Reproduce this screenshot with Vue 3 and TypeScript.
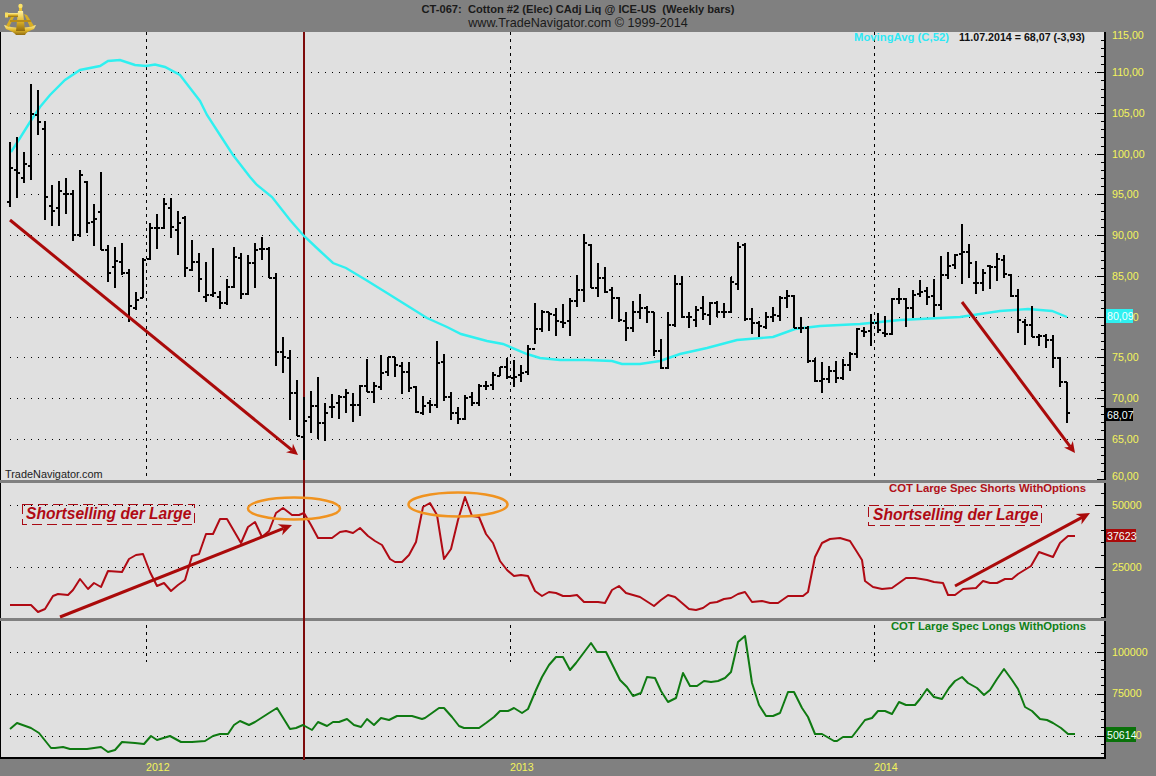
<script setup lang="ts">
type Bar = [number, number, number, number]
type Pt = [number, number]

// weekly bars in page pixels: high, low, open, close
const bars: Bar[] = [
  [142,207,202,168],[137,198,170,173],[152,183,178,164],[84,180,166,114],[90,135,115,122],[121,220,129,197],
  [185,226,206,211],[181,226,208,191],[178,214,194,194],[190,241,194,235],[170,237,235,175],[181,233,182,223],
  [204,246,222,219],[172,250,212,250],[245,282,250,273],[247,288,267,261],[243,275,262,273],[269,322,273,306],
  [292,310,308,300],[258,298,298,260],[223,260,259,228],[214,249,228,228],[198,229,228,204],[198,238,208,227],
  [211,255,230,223],[216,277,218,268],[240,271,270,262],[253,292,262,279],[262,302,297,295],[248,297,295,293],
  [291,309,297,303],[279,305,303,287],[247,288,287,257],[253,299,258,294],[255,295,294,263],[243,288,263,250],
  [237,260,249,249],[247,278,249,278],[273,366,278,352],[337,373,352,357],[350,420,358,393],[380,436,393,436],
  [397,460,437,421],[391,433,417,406],[377,439,406,423],[403,441,423,413],[394,418,407,407],[395,419,403,397],
  [389,413,397,393],[393,422,405,405],[385,416,405,386],[359,392,386,392],[382,403,392,386],[355,390,387,373],
  [357,376,372,357],[357,377,357,365],[362,394,366,372],[362,392,372,388],[386,413,387,412],[396,415,413,406],
  [400,413,403,405],[341,408,405,363],[354,401,362,397],[392,420,397,413],[407,424,413,419],[395,420,419,398],
  [392,406,397,403],[384,406,403,386],[381,390,386,386],[372,390,385,375],[367,376,376,367],[358,379,367,377],
  [360,387,378,377],[365,382,375,373],[345,375,372,349],[303,344,349,329],[310,332,329,312],[312,331,312,314],
  [308,336,315,321],[304,328,322,323],[298,336,321,301],[275,307,301,290],[234,302,290,243],[244,288,245,288],
  [263,297,288,278],[267,293,278,292],[287,319,290,298],[297,322,298,320],[312,341,321,328],[301,332,328,312],
  [294,319,312,308],[306,323,308,312],[312,356,312,351],[339,369,351,368],[312,369,368,325],[275,327,325,284],
  [276,318,284,317],[312,328,317,317],[306,327,320,310],[296,320,308,314],[302,325,315,303],[301,317,303,312],
  [303,318,312,312],[277,313,312,282],[242,290,284,247],[243,321,245,319],[308,334,319,323],[321,337,323,326],
  [312,329,327,317],[307,322,317,315],[296,321,316,298],[290,308,298,296],[295,328,296,328],[317,333,328,328],
  [326,363,328,361],[358,382,361,381],[362,393,381,379],[366,383,379,371],[361,383,371,378],[359,380,378,365],
  [352,371,365,354],[328,358,354,329],[327,337,331,332],[314,346,331,323],[313,333,323,330],[316,337,333,334],
  [298,335,334,299],[288,304,299,299],[298,327,299,308],[290,318,308,295],[280,297,294,292],[287,305,291,297],
  [279,317,296,305],[256,310,305,275],[252,279,275,266],[254,269,265,255],[224,284,254,252],[244,278,252,263],
  [261,294,283,283],[269,291,283,273],[265,289,266,267],[253,281,267,259],[255,278,260,274],[274,297,275,296],
  [289,333,296,320],[319,345,322,325],[306,337,325,337],[334,346,337,336],[334,348,336,340],[335,368,340,358],
  [357,387,358,382],[382,423,382,413]
]

const barPath = bars
  .map(([hi, lo, open, close], i) => {
    const x = 10 + 7 * i
    return `M${x} ${hi}V${lo}M${x - 3} ${open}H${x}M${x} ${close}H${x + 3}`
  })
  .join('')

const movingAvg = '11,152 20,138 30,122 40,107 50,95 65,80 80,70 100,66 108,61 120,60 135,65 146,66 155,64.5 165,67 180,75 190,88 200,101 207,115 220,135 233,155 250,177 257,185 272,197 290,220 304,236 320,251 333,263 346,268 366,280 387,293 403,303 427,318 447,327 461,334 487,341 503,344 527,354 540,358 560,360 587,360 612,361 622,364 640,364 660,361 680,354 707,348 737,340 773,337 795,329 820,326 860,324 900,320 960,317 1000,311 1028,309 1052,311 1067,317'

const shorts = '10,605 31,605 38,612 45,609 53,596 58,594 68,595 73,590 80,579 88,589 94,583 101,587 108,571 122,572 129,559 136,555 143,554 150,572 157,586 164,583 171,591 178,585 185,580 192,556 199,554 206,534 213,534 220,519 227,519 241,543 248,527 255,522 262,537 269,531 276,513 283,508 292,515 299,515 304,513 311,525 318,538 332,538 340,532 346,531 353,533 360,528 368,536 375,541 382,545 390,559 395,562 402,562 409,555 416,542 423,507 430,503 437,515 444,559 451,549 458,520 465,497 472,516 479,517 486,534 493,543 500,561 507,570 514,576 521,575 528,576 535,591 542,596 549,592 556,593 563,596 570,596 577,595 584,602 598,602 605,603 612,590 619,586 626,593 640,597 654,606 661,600 668,595 675,597 689,609 696,610 703,608 710,603 717,602 724,599 731,598 738,594 745,592 752,602 762,601 770,603 778,603 788,596 803,596 808,592 815,557 822,543 830,539 840,538 850,541 857,552 862,560 865,581 873,587 882,589 892,588 906,578 915,578 927,580 934,582 943,583 948,595 955,595 963,589 976,588 983,581 990,583 997,583 1005,579 1012,579 1018,574 1031,566 1039,552 1053,557 1060,543 1068,536 1075,536'

const longs = '10,729 17,723 31,728 39,733 51,748 55,748 63,747 70,749 87,749 101,747 108,752 115,750 122,742 135,743 144,744 151,736 157,740 170,736 181,742 192,742 205,741 213,736 220,734 228,734 234,725 240,721 249,725 255,722 269,713 277,708 290,729 296,728 303,725 312,730 318,722 327,726 333,722 339,722 347,719 354,725 361,727 367,719 374,725 381,718 389,720 397,716 412,716 422,719 425,718 439,708 444,708 452,717 459,726 464,728 479,728 486,723 494,717 500,711 508,711 514,708 522,713 528,709 536,690 542,677 549,665 556,657 563,657 570,670 576,663 591,643 597,652 606,652 620,680 627,687 633,696 641,693 647,677 655,678 661,691 668,702 676,698 683,673 690,686 697,686 704,681 711,682 718,681 725,678 731,672 738,642 745,636 752,683 759,705 766,716 773,716 780,713 788,692 794,692 802,708 808,717 815,734 822,734 834,741 837,741 843,737 852,737 865,720 872,718 878,711 885,711 892,714 899,702 906,705 915,705 920,699 927,689 934,697 942,699 949,688 955,681 962,677 968,683 977,688 984,695 990,690 997,679 1004,669 1012,680 1018,689 1025,707 1032,711 1040,719 1047,720 1053,723 1061,728 1068,734 1075,734'

function arrow(from: Pt, to: Pt, len: number, half: number) {
  const dx = to[0] - from[0]
  const dy = to[1] - from[1]
  const d = Math.hypot(dx, dy)
  const ux = dx / d
  const uy = dy / d
  const bx = to[0] - ux * len
  const by = to[1] - uy * len
  const nx = to[0] - ux * len * 0.7
  const ny = to[1] - uy * len * 0.7
  const head = [
    [to[0], to[1]],
    [bx - uy * half, by + ux * half],
    [nx, ny],
    [bx + uy * half, by - ux * half]
  ]
  return {
    x1: from[0],
    y1: from[1],
    x2: nx,
    y2: ny,
    head: head.map((p) => p.join(',')).join(' ')
  }
}

const priceArrows = [arrow([10, 220], [298, 455], 11, 5.5), arrow([962, 302], [1075, 453], 11, 5.5)]
const shortArrows = [arrow([60, 617], [292, 525], 13, 6), arrow([955, 586], [1090, 513], 13, 6)]

const priceY = (v: number) => 72.3 + (110 - v) * 8.14
const shortY = (v: number) => 505 + ((50000 - v) * 62) / 25000
const longY = (v: number) => 651.7 + ((100000 - v) * 42) / 25000

const range = (from: number, to: number, step: number) => {
  const out: number[] = []
  for (let v = from; v <= to; v += step) out.push(v)
  return out
}

const priceTicks = range(60, 114, 1).map((v) => ({ y: Math.round(priceY(v)) + 0.5, major: v % 5 === 0 }))
const shortTicks = range(5000, 55000, 5000).map((v) => ({ y: Math.round(shortY(v)) + 0.5, major: v % 25000 === 0 }))
const longTicks = range(40000, 110000, 5000).map((v) => ({ y: Math.round(longY(v)) + 0.5, major: v % 25000 === 0 }))

const priceGrid = range(65, 110, 5).map((v) => Math.round(priceY(v)) + 0.5)
const shortGrid = [50000, 25000].map((v) => Math.round(shortY(v)) + 0.5)
const longGrid = [100000, 75000, 50000].map((v) => Math.round(longY(v)) + 0.5)

const yearX = [146.5, 510.5, 874.5]
const years = ['2012', '2013', '2014']

const priceLabels = [
  { t: '115,00', y: 35 },
  ...range(65, 110, 5).reverse().map((v) => ({ t: `${v},00`, y: priceY(v) })),
  { t: '60,00', y: 476 }
]
</script>

<template>
  <div class="page">
    <header class="title">
      <svg class="logo" viewBox="0 0 36 36" width="36" height="36">
        <defs>
          <linearGradient id="gold" x1="0" y1="0" x2="0" y2="1">
            <stop offset="0" stop-color="#fff2a0" />
            <stop offset="0.5" stop-color="#e3b82a" />
            <stop offset="1" stop-color="#8f6a10" />
          </linearGradient>
        </defs>
        <path d="M3 24 Q19 30 35 24 L33 28 Q25 31 24 34 L15 34 Q13 31 5 28 Z" fill="url(#gold)" />
        <path d="M17 10 L22 10 L24 30 L15 30 Z" fill="url(#gold)" />
        <path d="M18 4 H21 V10 H18 Z" fill="#e8c030" />
        <circle cx="19.5" cy="5" r="2.2" fill="#fbe36a" />
        <path d="M4 12 H17 V16 H4 Z" fill="url(#gold)" />
        <path d="M4 11.5 H7 V16.5 H4 Z" fill="#f6dc60" />
        <path d="M10 16 L13 16 L8 26 L5 25 Z" fill="#d8ae24" />
        <path d="M23 13 L26 14 L33 25 L29 26 Z" fill="#d8ae24" />
        <path d="M9 19 H30 V21 H9 Z" fill="#b88c18" />
      </svg>
      <div class="title-main">CT-067:&nbsp; Cotton #2 (Elec) CAdj Liq @ ICE-US&nbsp; (Weekly bars)</div>
      <div class="title-sub">www.TradeNavigator.com © 1999-2014</div>
    </header>

    <section class="pane">
      <svg class="plot price" viewBox="1 32 1103 448">
        <line v-for="y in priceGrid" :key="y" class="dots" x1="10" :y1="y" x2="1098" :y2="y" />
        <line v-for="x in yearX" :key="x" class="dash" :x1="x" y1="32" :x2="x" y2="480" />
        <line class="marker" x1="304" y1="32" x2="304" y2="483" />
        <line v-for="t in priceTicks" :key="t.y" class="tick" :x1="t.major ? 1097 : 1101" :y1="t.y" x2="1104" :y2="t.y" />
        <polyline class="avg" :points="movingAvg" />
        <path class="bars" :d="barPath" />
        <g v-for="a in priceArrows" :key="a.x1">
          <line class="arrow" :x1="a.x1" :y1="a.y1" :x2="a.x2" :y2="a.y2" />
          <polygon class="head" :points="a.head" />
        </g>
        <text class="legend wide cyan" x="854" y="41">MovingAvg (C,52)</text>
        <text class="legend black" x="959" y="41">11.07.2014 = 68,07 (-3,93)</text>
        <text class="brand" x="5" y="478">TradeNavigator.com</text>
      </svg>
      <svg class="axis price" viewBox="1106 32 50 448">
        <text v-for="l in priceLabels" :key="l.t" class="scale" x="1112" :y="l.y + 4">{{ l.t }}</text>
        <rect x="1106" y="309" width="27" height="14" fill="#2ff0f0" />
        <text class="badge" x="1107" y="320">80,09</text>
        <rect x="1106" y="408" width="27" height="13" fill="#000" />
        <text class="badge" x="1107" y="418.5">68,07</text>
      </svg>
    </section>

    <section class="pane">
      <svg class="plot shorts" viewBox="1 483 1103 135">
        <line v-for="y in shortGrid" :key="y" class="dots" x1="10" :y1="y" x2="1098" :y2="y" />
        <line class="marker" x1="304" y1="481" x2="304" y2="621" />
        <line v-for="t in shortTicks" :key="t.y" class="tick" :x1="t.major ? 1096 : 1101" :y1="t.y" x2="1104" :y2="t.y" />
        <polyline class="series red" :points="shorts" />
        <g v-for="a in shortArrows" :key="a.x1">
          <line class="arrow" :x1="a.x1" :y1="a.y1" :x2="a.x2" :y2="a.y2" />
          <polygon class="head" :points="a.head" />
        </g>
        <ellipse class="oval" cx="294" cy="508.5" rx="46" ry="11" />
        <ellipse class="oval" cx="458" cy="504.5" rx="49.5" ry="12" />
        <rect class="note-box" x="22.5" y="504.5" width="172" height="20" />
        <text class="note" x="26" y="518.5">Shortselling der Large</text>
        <rect class="note-box" x="868.5" y="505.5" width="173" height="20" />
        <text class="note" x="873" y="519.5">Shortselling der Large</text>
        <text class="legend wide redtext" x="1086" y="492" text-anchor="end">COT Large Spec Shorts WithOptions</text>
      </svg>
      <svg class="axis shorts" viewBox="1106 483 50 135">
        <text class="scale" x="1112" y="509">50000</text>
        <text class="scale" x="1112" y="571">25000</text>
        <rect x="1106" y="529" width="30" height="13" fill="#aa0a0a" />
        <text class="badge" x="1107" y="539.5">37623</text>
      </svg>
    </section>

    <section class="pane">
      <svg class="plot longs" viewBox="1 621 1103 136">
        <line v-for="y in longGrid" :key="y" class="dots" x1="10" :y1="y" x2="1098" :y2="y" />
        <line v-for="x in yearX" :key="x" class="dash" :x1="x" y1="625" :x2="x" y2="662" />
        <line class="marker" x1="304" y1="619" x2="304" y2="760" />
        <line v-for="t in longTicks" :key="t.y" class="tick" :x1="t.major ? 1097 : 1101" :y1="t.y" x2="1104" :y2="t.y" />
        <polyline class="series green" :points="longs" />
        <text class="legend wide greentext" x="1086" y="630" text-anchor="end">COT Large Spec Longs WithOptions</text>
      </svg>
      <svg class="axis longs" viewBox="1106 621 50 136">
        <text class="scale" x="1112" y="656">100000</text>
        <text class="scale" x="1112" y="697">75000</text>
        <text class="scale" x="1112" y="739">50000</text>
        <rect x="1106" y="727" width="30" height="15" fill="#0a720a" />
        <text class="badge" x="1107" y="738.5">50614</text>
      </svg>
    </section>

    <footer class="years">
      <span v-for="y in years" :key="y">{{ y }}</span>
    </footer>
  </div>
</template>

<style>
html,
body {
  margin: 0;
  background: #808080;
}
</style>

<style scoped>
.page {
  position: relative;
  width: 1156px;
  height: 776px;
  display: flex;
  flex-direction: column;
  background: #808080;
  font-family: 'Liberation Sans', Arial, sans-serif;
  overflow: hidden;
}

.title {
  height: 32px;
  box-sizing: border-box;
  padding-top: 2px;
  display: flex;
  flex-direction: column;
  align-items: center;
  color: #1a1a1a;
}

.logo {
  position: absolute;
  left: 1px;
  top: 1px;
  z-index: 2;
}

.title-main {
  font-size: 11.13px;
  font-weight: 700;
  line-height: 14px;
}

.title-sub {
  font-size: 12.6px;
  line-height: 15px;
}

.pane {
  display: flex;
  margin-bottom: 3px;
  border-left: 1px solid #000;
}

.pane:nth-of-type(3) {
  margin-bottom: 0;
}

.plot {
  display: block;
  width: 1103px;
  background: #e0e0e0;
  border-right: 2px solid #000;
  overflow: visible;
}

.axis {
  display: block;
  width: 50px;
  overflow: visible;
}

.price {
  height: 448px;
}

.shorts {
  height: 135px;
}

.longs {
  height: 136px;
  border-bottom: 2px solid #000;
}

.axis.longs {
  border-bottom: 0;
}

.dots {
  stroke: #000;
  stroke-dasharray: 1 6;
  shape-rendering: crispEdges;
}

.dash {
  stroke: #000;
  stroke-dasharray: 3 4;
  shape-rendering: crispEdges;
}

.marker {
  stroke: #7d0a0a;
  stroke-width: 2;
  shape-rendering: crispEdges;
}

.tick {
  stroke: #000;
  shape-rendering: crispEdges;
}

.avg {
  fill: none;
  stroke: #2ff0f0;
  stroke-width: 2.4;
}

.bars {
  fill: none;
  stroke: #000;
  stroke-width: 2;
  shape-rendering: crispEdges;
}

.series {
  fill: none;
  stroke-width: 2;
  stroke-linejoin: round;
}

.red {
  stroke: #b00a14;
}

.green {
  stroke: #0f7a12;
}

.arrow {
  stroke: #aa0a0a;
  stroke-width: 3;
}

.head {
  fill: #aa0a0a;
}

.oval {
  fill: none;
  stroke: #f09320;
  stroke-width: 2.5;
}

.note-box {
  fill: none;
  stroke: #a80a14;
  stroke-dasharray: 10 5;
  shape-rendering: crispEdges;
}

.note {
  font-size: 15.6px;
  font-weight: 700;
  font-style: italic;
  fill: #b00a14;
}

.legend {
  font-size: 10.67px;
  font-weight: 700;
}

.legend.wide {
  font-size: 11.3px;
}

.cyan {
  fill: #2fe8f5;
}

.black {
  fill: #111;
}

.redtext {
  fill: #b01018;
}

.greentext {
  fill: #108018;
}

.brand {
  font-size: 10.9px;
  fill: #222;
}

.scale {
  font-size: 10.67px;
  fill: #f4f45c;
}

.badge {
  font-size: 10.67px;
  fill: #f2ffff;
}

.years {
  display: flex;
  padding: 2px 0 0 146px;
  font-size: 10.67px;
  line-height: 13px;
  color: #f4f45c;
}

.years span {
  flex: none;
  width: 364px;
}
</style>
